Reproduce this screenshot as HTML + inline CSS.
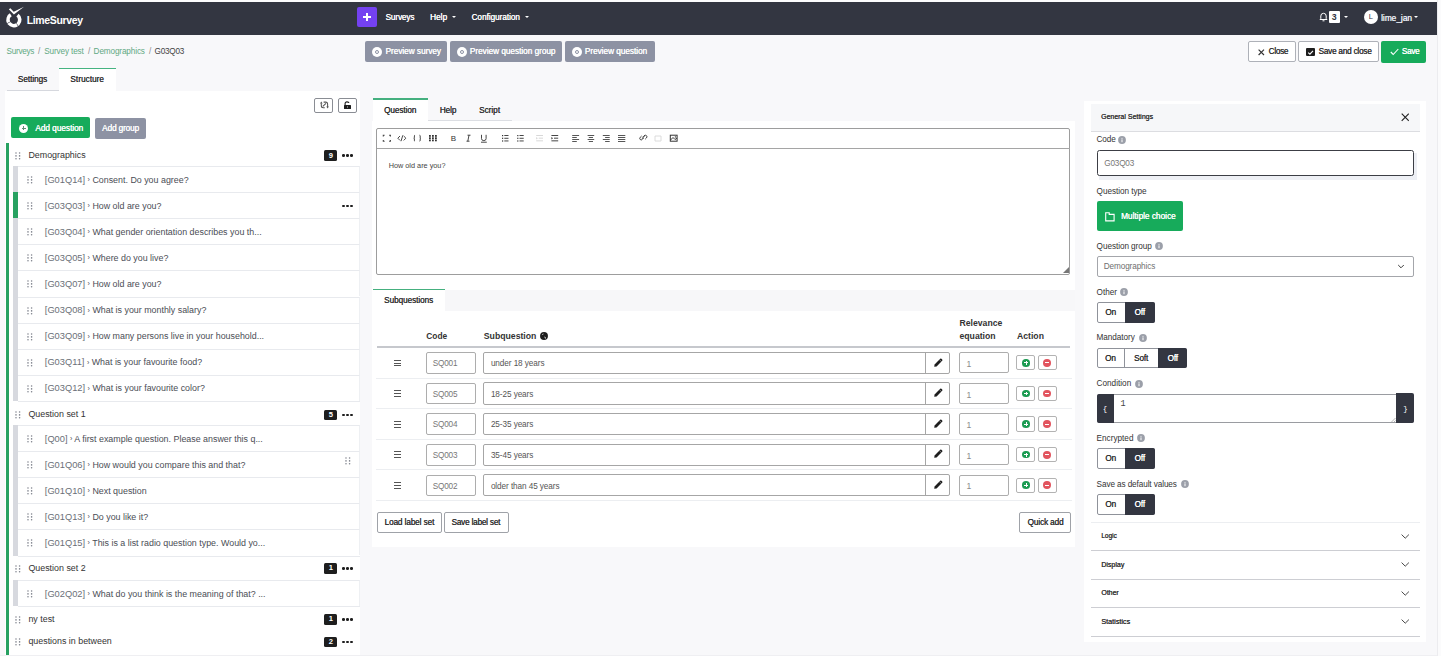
<!DOCTYPE html>
<html><head><meta charset="utf-8">
<style>
*{box-sizing:border-box;margin:0;padding:0}
html,body{width:1441px;height:656px;overflow:hidden}
body{background:#f8f8fa;font-family:"Liberation Sans",sans-serif;color:#333;position:relative;font-size:8px}
.a{position:absolute}
.t{position:absolute;white-space:nowrap;line-height:12px}
.b{font-weight:bold}
.m{font-weight:normal;text-shadow:0.25px 0 0 currentColor}
#hdr{left:0;top:2px;width:1437px;height:32.5px;background:#333641}
#rstrip{left:1437px;top:0;width:4px;height:656px;background:#fbfbfc;border-left:1px solid #ececef}
#tstrip{left:0;top:0;width:1437px;height:2px;background:#fcfcfd}
.wt{color:#fff}
.pbtn{position:absolute;top:41px;height:21px;background:#8d92a3;border-radius:2px}
.pbtn .t{color:#fff;font-weight:normal;text-shadow:0.3px 0 0 #fff;font-size:8.2px;top:4.5px}
.eye{position:absolute;top:5.5px;width:10px;height:10px;border-radius:50%;background:#fff}
.eye:after{content:"";position:absolute;left:3px;top:3px;width:4px;height:4px;border-radius:50%;border:1px solid #8d92a3;box-sizing:border-box}
.obtn{position:absolute;top:41px;height:21px;background:#fff;border:1px solid #aeb1b8;border-radius:2px}
.panel{position:absolute;background:#fff}
</style></head><body>
<!-- header -->
<div id="hdr" class="a"></div>
<div id="rstrip" class="a"></div>
<div id="tstrip" class="a"></div>
<svg class="a" style="left:0;top:0" width="30" height="35" viewBox="0 0 30 35">
  <path d="M10.80 14.84 A5.85 5.85 0 1 0 17.50 15.19" fill="none" stroke="#fff" stroke-width="3.6" stroke-dasharray="8.2 0.55 9 0.55 30"/>
  <path d="M8.8 9.3 L10.4 8.3 L13.7 11.7 L24 6.8 L13.9 14.4 Z" fill="#fff"/>
</svg>
<div class="t b wt" style="left:26.7px;top:14.3px;font-size:10.5px;letter-spacing:-0.36px">LimeSurvey</div>
<div class="a" style="left:357px;top:7px;width:20px;height:20px;background:#7441f1;border-radius:2px"></div>
<div class="a" style="left:363px;top:16.3px;width:8px;height:1.5px;background:#fff"></div>
<div class="a" style="left:366.25px;top:13px;width:1.5px;height:8px;background:#fff"></div>
<div class="t m wt" style="left:385.5px;top:11.5px;font-size:8.2px;letter-spacing:-0.12px">Surveys</div>
<div class="t m wt" style="left:430px;top:11.5px;font-size:8.27px">Help</div>
<div class="a" style="left:451.5px;top:16px;border-left:2px solid transparent;border-right:2px solid transparent;border-top:2.3px solid #fff"></div>
<div class="t m wt" style="left:471.5px;top:11.5px;font-size:8.15px">Configuration</div>
<div class="a" style="left:524.7px;top:16px;border-left:2px solid transparent;border-right:2px solid transparent;border-top:2.3px solid #fff"></div>
<!-- bell -->
<svg class="a" style="left:1319px;top:12px" width="9" height="10" viewBox="0 0 9 10">
  <path d="M1 7.5 L1.8 6.5 L1.8 4 A2.7 2.7 0 0 1 7.2 4 L7.2 6.5 L8 7.5 Z" fill="none" stroke="#fff" stroke-width="1"/>
  <path d="M3.5 8.8 L5.5 8.8" stroke="#fff" stroke-width="1"/>
</svg>
<div class="a" style="left:1329px;top:11.3px;width:10.5px;height:11.5px;background:#fff;border-radius:1px"></div>
<div class="t b" style="left:1329px;width:10.5px;text-align:center;top:11.2px;font-size:8.8px;color:#333641">3</div>
<div class="a" style="left:1343.7px;top:15.5px;border-left:2px solid transparent;border-right:2px solid transparent;border-top:2.3px solid #fff"></div>
<div class="a" style="left:1364px;top:10px;width:14px;height:14px;background:#fff;border-radius:50%"></div>
<div class="t" style="left:1368.7px;top:11px;font-size:7.5px;color:#333641">L</div>
<div class="t m" style="left:1381px;top:11.5px;font-size:8.32px;color:#e8ecf3">lime_jan</div>
<div class="a" style="left:1414px;top:16px;border-left:2px solid transparent;border-right:2px solid transparent;border-top:2.3px solid #fff"></div>

<!-- breadcrumb -->
<div class="t" style="left:6.6px;top:45.5px;font-size:8.2px;letter-spacing:-0.3px;color:#62a883">Surveys</div>
<div class="t" style="left:38px;top:45.5px;font-size:8.2px;color:#8a8a8a">/</div>
<div class="t" style="left:44.2px;top:45.5px;font-size:8.2px;letter-spacing:-0.13px;color:#62a883">Survey test</div>
<div class="t" style="left:88px;top:45.5px;font-size:8.2px;color:#8a8a8a">/</div>
<div class="t" style="left:93.6px;top:45.5px;font-size:8.2px;letter-spacing:-0.13px;color:#62a883">Demographics</div>
<div class="t" style="left:149px;top:45.5px;font-size:8.2px;color:#8a8a8a">/</div>
<div class="t" style="left:154.5px;top:45.5px;font-size:8.2px;letter-spacing:-0.24px;color:#444">G03Q03</div>

<!-- preview buttons -->
<div class="pbtn" style="left:365px;width:82px"><div class="eye" style="left:7px"></div><div class="t" style="left:20.4px">Preview survey</div></div>
<div class="pbtn" style="left:450px;width:112px"><div class="eye" style="left:7px"></div><div class="t" style="left:19.8px">Preview question group</div></div>
<div class="pbtn" style="left:565px;width:89.5px"><div class="eye" style="left:7px"></div><div class="t" style="left:19.7px">Preview question</div></div>

<!-- right buttons -->
<div class="obtn" style="left:1248px;width:47.5px"></div>
<svg class="a" style="left:1257.6px;top:48.6px" width="7" height="7" viewBox="0 0 7 7"><path d="M0.6 0.6 L6 6 M6 0.6 L0.6 6" stroke="#333" stroke-width="1.15"/></svg>
<div class="t m" style="left:1268.6px;top:45.5px;font-size:8.2px;letter-spacing:-0.28px;color:#333">Close</div>
<div class="obtn" style="left:1297.6px;width:81px"></div>
<div class="a" style="left:1306.3px;top:47.5px;width:8.6px;height:8.4px;background:#1e1e1e;border-radius:1px"></div>
<svg class="a" style="left:1307px;top:48.5px" width="7" height="7" viewBox="0 0 7 7"><path d="M1.2 3.6 L2.9 5.2 L6 1.8" fill="none" stroke="#fff" stroke-width="1.1"/></svg>
<div class="t m" style="left:1318.4px;top:45.5px;font-size:8.2px;letter-spacing:-0.2px;color:#333">Save and close</div>
<div class="a" style="left:1381.2px;top:41px;width:45px;height:21.5px;background:#17ab5b;border-radius:2px"></div>
<svg class="a" style="left:1389.5px;top:47.5px" width="9" height="8" viewBox="0 0 9 8"><path d="M0.8 4 L3.2 6.5 L8.3 1" fill="none" stroke="#fff" stroke-width="1.1"/></svg>
<div class="t m wt" style="left:1401.8px;top:45.5px;font-size:8.2px;letter-spacing:-0.3px">Save</div>

<!-- tabs -->
<div class="a" style="left:6.6px;top:89.5px;width:52.4px;height:1px;background:#d6d8de"></div>
<div class="t m" style="left:17.8px;top:74px;font-size:8.2px;color:#333;letter-spacing:-0.05px">Settings</div>
<div class="a" style="left:59px;top:69px;width:57px;height:23px;background:#fff"></div>
<div class="a" style="left:59px;top:67.7px;width:57px;height:1.6px;background:#45b381"></div>
<div class="t m" style="left:70.3px;top:74px;font-size:8.2px;letter-spacing:0.05px;color:#333">Structure</div>

<!-- left panel -->
<!-- left -->
<div class="panel" style="left:5px;top:91px;width:355px;height:565px"></div>

<div class="a" style="left:314.3px;top:98.3px;width:19px;height:14.3px;border:1px solid #8a8d94;border-radius:2px;background:#fff"></div>
<svg class="a" style="left:319.5px;top:101.3px" width="9" height="8" viewBox="0 0 9 8"><g fill="none" stroke="#555" stroke-width="1.05"><path d="M1.3 2.2 L1.3 4.8 Q1.3 6.8 3.3 6.8 L4.8 6.8"/><path d="M3.6 1.1 L5.6 1.1 Q7.6 1.1 7.6 3.1 L7.6 6"/><path d="M2.8 5.4 L6 2.3"/></g><path d="M0 2.6 L1.3 0.6 L2.6 2.6Z M6.3 5.6 L7.6 7.6 L8.9 5.6Z" fill="#555"/></svg>
<div class="a" style="left:338.2px;top:98.3px;width:18.5px;height:14.3px;border:1px solid #8a8d94;border-radius:2px;background:#fff"></div>
<div class="a" style="left:344.1px;top:105px;width:7px;height:3.9px;background:#1e1e1e;border-radius:0.5px"></div>
<svg class="a" style="left:343px;top:101px" width="10" height="5" viewBox="0 0 10 5"><path d="M2.1 4.5 L2.1 2.6 Q2.1 0.9 4 0.9 Q5.9 0.9 5.9 2 " fill="none" stroke="#1e1e1e" stroke-width="1.1"/></svg><div class="a" style="left:347px;top:106.2px;width:1.3px;height:1.4px;background:#777"></div>
<div class="a" style="left:11px;top:117.4px;width:79px;height:21px;background:#17ab5b;border-radius:2px"></div>
<div class="a" style="left:19px;top:123.5px;width:9.4px;height:9.4px;border-radius:50%;background:#fff"></div>
<div class="a" style="left:21.7px;top:127.8px;width:4px;height:0.8px;background:#5f8f76"></div>
<div class="a" style="left:23.3px;top:126.2px;width:0.8px;height:4px;background:#5f8f76"></div>
<div class="t m wt" style="left:35.2px;top:122.8px;font-size:8.22px">Add question</div>
<div class="a" style="left:95.1px;top:118px;width:51.4px;height:20.5px;background:#8d92a3;border-radius:2px"></div>
<div class="t m wt" style="left:102.1px;top:122.8px;font-size:8.2px;letter-spacing:-0.1px">Add group</div>

<div class="a" style="left:6px;top:143px;width:3px;height:511.5px;background:#27a161"></div>
<svg class="a" style="left:15.15px;top:151.65px" width="7" height="9" viewBox="0 0 7 9" fill="#7d818b"><circle cx="1.00" cy="1.00" r="0.78"/><circle cx="4.60" cy="1.00" r="0.78"/><circle cx="1.00" cy="3.90" r="0.78"/><circle cx="4.60" cy="3.90" r="0.78"/><circle cx="1.00" cy="6.80" r="0.78"/><circle cx="4.60" cy="6.80" r="0.78"/></svg>
<div class="t" style="left:28.4px;top:148.60px;font-size:8.9px;color:#333">Demographics</div>
<div class="a" style="left:324.4px;top:150.20px;width:13px;height:10.8px;background:#1e1e1e;border-radius:1.5px"></div>
<div class="t b" style="left:324.4px;width:13px;text-align:center;top:149.50px;font-size:7.6px;color:#fff">9</div>
<div class="a" style="left:342.20px;top:154.15px;width:2.6px;height:2.6px;border-radius:50%;background:#1e1e1e"></div><div class="a" style="left:346.10px;top:154.15px;width:2.6px;height:2.6px;border-radius:50%;background:#1e1e1e"></div><div class="a" style="left:350.00px;top:154.15px;width:2.6px;height:2.6px;border-radius:50%;background:#1e1e1e"></div>
<div class="a" style="left:13px;top:166.00px;width:4.7px;height:234.90px;background:#d7d9df"></div>
<div class="a" style="left:17.7px;top:166.00px;width:342.3px;height:26.10px;border-top:1px solid #e8eaee;border-right:1px solid #eef0f3"></div>
<svg class="a" style="left:27.25px;top:176.05px" width="7" height="9" viewBox="0 0 7 9" fill="#7d818b"><circle cx="1.00" cy="1.00" r="0.78"/><circle cx="4.60" cy="1.00" r="0.78"/><circle cx="1.00" cy="3.90" r="0.78"/><circle cx="4.60" cy="3.90" r="0.78"/><circle cx="1.00" cy="6.80" r="0.78"/><circle cx="4.60" cy="6.80" r="0.78"/></svg>
<div class="t" style="left:44.8px;top:173.50px;font-size:8.9px;color:#4a4d55"><span style="color:#6b6f78;font-size:9.3px">[G01Q14]</span> <span style="font-size:7px;position:relative;top:-0.5px">›</span> Consent. Do you agree?</div>
<div class="a" style="left:17.7px;top:192.10px;width:342.3px;height:26.10px;border-top:1px solid #e8eaee;border-right:1px solid #eef0f3"></div>
<svg class="a" style="left:27.25px;top:202.15px" width="7" height="9" viewBox="0 0 7 9" fill="#7d818b"><circle cx="1.00" cy="1.00" r="0.78"/><circle cx="4.60" cy="1.00" r="0.78"/><circle cx="1.00" cy="3.90" r="0.78"/><circle cx="4.60" cy="3.90" r="0.78"/><circle cx="1.00" cy="6.80" r="0.78"/><circle cx="4.60" cy="6.80" r="0.78"/></svg>
<div class="t" style="left:44.8px;top:199.60px;font-size:8.9px;color:#4a4d55"><span style="color:#6b6f78;font-size:9.3px">[G03Q03]</span> <span style="font-size:7px;position:relative;top:-0.5px">›</span> How old are you?</div>
<div class="a" style="left:13px;top:192.10px;width:4.7px;height:26.10px;background:#27a161"></div>
<div class="a" style="left:342.20px;top:204.75px;width:2.6px;height:2.6px;border-radius:50%;background:#1e1e1e"></div><div class="a" style="left:346.10px;top:204.75px;width:2.6px;height:2.6px;border-radius:50%;background:#1e1e1e"></div><div class="a" style="left:350.00px;top:204.75px;width:2.6px;height:2.6px;border-radius:50%;background:#1e1e1e"></div>
<div class="a" style="left:17.7px;top:218.20px;width:342.3px;height:26.10px;border-top:1px solid #e8eaee;border-right:1px solid #eef0f3"></div>
<svg class="a" style="left:27.25px;top:228.25px" width="7" height="9" viewBox="0 0 7 9" fill="#7d818b"><circle cx="1.00" cy="1.00" r="0.78"/><circle cx="4.60" cy="1.00" r="0.78"/><circle cx="1.00" cy="3.90" r="0.78"/><circle cx="4.60" cy="3.90" r="0.78"/><circle cx="1.00" cy="6.80" r="0.78"/><circle cx="4.60" cy="6.80" r="0.78"/></svg>
<div class="t" style="left:44.8px;top:225.70px;font-size:8.9px;color:#4a4d55"><span style="color:#6b6f78;font-size:9.3px">[G03Q04]</span> <span style="font-size:7px;position:relative;top:-0.5px">›</span> What gender orientation describes you th...</div>
<div class="a" style="left:17.7px;top:244.30px;width:342.3px;height:26.10px;border-top:1px solid #e8eaee;border-right:1px solid #eef0f3"></div>
<svg class="a" style="left:27.25px;top:254.35px" width="7" height="9" viewBox="0 0 7 9" fill="#7d818b"><circle cx="1.00" cy="1.00" r="0.78"/><circle cx="4.60" cy="1.00" r="0.78"/><circle cx="1.00" cy="3.90" r="0.78"/><circle cx="4.60" cy="3.90" r="0.78"/><circle cx="1.00" cy="6.80" r="0.78"/><circle cx="4.60" cy="6.80" r="0.78"/></svg>
<div class="t" style="left:44.8px;top:251.80px;font-size:8.9px;color:#4a4d55"><span style="color:#6b6f78;font-size:9.3px">[G03Q05]</span> <span style="font-size:7px;position:relative;top:-0.5px">›</span> Where do you live?</div>
<div class="a" style="left:17.7px;top:270.40px;width:342.3px;height:26.10px;border-top:1px solid #e8eaee;border-right:1px solid #eef0f3"></div>
<svg class="a" style="left:27.25px;top:280.45px" width="7" height="9" viewBox="0 0 7 9" fill="#7d818b"><circle cx="1.00" cy="1.00" r="0.78"/><circle cx="4.60" cy="1.00" r="0.78"/><circle cx="1.00" cy="3.90" r="0.78"/><circle cx="4.60" cy="3.90" r="0.78"/><circle cx="1.00" cy="6.80" r="0.78"/><circle cx="4.60" cy="6.80" r="0.78"/></svg>
<div class="t" style="left:44.8px;top:277.90px;font-size:8.9px;color:#4a4d55"><span style="color:#6b6f78;font-size:9.3px">[G03Q07]</span> <span style="font-size:7px;position:relative;top:-0.5px">›</span> How old are you?</div>
<div class="a" style="left:17.7px;top:296.50px;width:342.3px;height:26.10px;border-top:1px solid #e8eaee;border-right:1px solid #eef0f3"></div>
<svg class="a" style="left:27.25px;top:306.55px" width="7" height="9" viewBox="0 0 7 9" fill="#7d818b"><circle cx="1.00" cy="1.00" r="0.78"/><circle cx="4.60" cy="1.00" r="0.78"/><circle cx="1.00" cy="3.90" r="0.78"/><circle cx="4.60" cy="3.90" r="0.78"/><circle cx="1.00" cy="6.80" r="0.78"/><circle cx="4.60" cy="6.80" r="0.78"/></svg>
<div class="t" style="left:44.8px;top:304.00px;font-size:8.9px;color:#4a4d55"><span style="color:#6b6f78;font-size:9.3px">[G03Q08]</span> <span style="font-size:7px;position:relative;top:-0.5px">›</span> What is your monthly salary?</div>
<div class="a" style="left:17.7px;top:322.60px;width:342.3px;height:26.10px;border-top:1px solid #e8eaee;border-right:1px solid #eef0f3"></div>
<svg class="a" style="left:27.25px;top:332.65px" width="7" height="9" viewBox="0 0 7 9" fill="#7d818b"><circle cx="1.00" cy="1.00" r="0.78"/><circle cx="4.60" cy="1.00" r="0.78"/><circle cx="1.00" cy="3.90" r="0.78"/><circle cx="4.60" cy="3.90" r="0.78"/><circle cx="1.00" cy="6.80" r="0.78"/><circle cx="4.60" cy="6.80" r="0.78"/></svg>
<div class="t" style="left:44.8px;top:330.10px;font-size:8.9px;color:#4a4d55"><span style="color:#6b6f78;font-size:9.3px">[G03Q09]</span> <span style="font-size:7px;position:relative;top:-0.5px">›</span> How many persons live in your household...</div>
<div class="a" style="left:17.7px;top:348.70px;width:342.3px;height:26.10px;border-top:1px solid #e8eaee;border-right:1px solid #eef0f3"></div>
<svg class="a" style="left:27.25px;top:358.75px" width="7" height="9" viewBox="0 0 7 9" fill="#7d818b"><circle cx="1.00" cy="1.00" r="0.78"/><circle cx="4.60" cy="1.00" r="0.78"/><circle cx="1.00" cy="3.90" r="0.78"/><circle cx="4.60" cy="3.90" r="0.78"/><circle cx="1.00" cy="6.80" r="0.78"/><circle cx="4.60" cy="6.80" r="0.78"/></svg>
<div class="t" style="left:44.8px;top:356.20px;font-size:8.9px;color:#4a4d55"><span style="color:#6b6f78;font-size:9.3px">[G03Q11]</span> <span style="font-size:7px;position:relative;top:-0.5px">›</span> What is your favourite food?</div>
<div class="a" style="left:17.7px;top:374.80px;width:342.3px;height:26.10px;border-top:1px solid #e8eaee;border-right:1px solid #eef0f3"></div>
<svg class="a" style="left:27.25px;top:384.85px" width="7" height="9" viewBox="0 0 7 9" fill="#7d818b"><circle cx="1.00" cy="1.00" r="0.78"/><circle cx="4.60" cy="1.00" r="0.78"/><circle cx="1.00" cy="3.90" r="0.78"/><circle cx="4.60" cy="3.90" r="0.78"/><circle cx="1.00" cy="6.80" r="0.78"/><circle cx="4.60" cy="6.80" r="0.78"/></svg>
<div class="t" style="left:44.8px;top:382.30px;font-size:8.9px;color:#4a4d55"><span style="color:#6b6f78;font-size:9.3px">[G03Q12]</span> <span style="font-size:7px;position:relative;top:-0.5px">›</span> What is your favourite color?</div>
<div class="a" style="left:17.7px;top:400.90px;width:342.3px;height:1px;background:#e8eaee"></div>
<svg class="a" style="left:15.15px;top:411.15px" width="7" height="9" viewBox="0 0 7 9" fill="#7d818b"><circle cx="1.00" cy="1.00" r="0.78"/><circle cx="4.60" cy="1.00" r="0.78"/><circle cx="1.00" cy="3.90" r="0.78"/><circle cx="4.60" cy="3.90" r="0.78"/><circle cx="1.00" cy="6.80" r="0.78"/><circle cx="4.60" cy="6.80" r="0.78"/></svg>
<div class="t" style="left:28.4px;top:408.10px;font-size:8.9px;color:#333">Question set 1</div>
<div class="a" style="left:324.4px;top:409.70px;width:13px;height:10.8px;background:#1e1e1e;border-radius:1.5px"></div>
<div class="t b" style="left:324.4px;width:13px;text-align:center;top:409.00px;font-size:7.6px;color:#fff">5</div>
<div class="a" style="left:342.20px;top:413.65px;width:2.6px;height:2.6px;border-radius:50%;background:#1e1e1e"></div><div class="a" style="left:346.10px;top:413.65px;width:2.6px;height:2.6px;border-radius:50%;background:#1e1e1e"></div><div class="a" style="left:350.00px;top:413.65px;width:2.6px;height:2.6px;border-radius:50%;background:#1e1e1e"></div>
<div class="a" style="left:13px;top:425.00px;width:4.7px;height:130.50px;background:#d7d9df"></div>
<div class="a" style="left:17.7px;top:425.00px;width:342.3px;height:26.10px;border-top:1px solid #e8eaee;border-right:1px solid #eef0f3"></div>
<svg class="a" style="left:27.25px;top:435.05px" width="7" height="9" viewBox="0 0 7 9" fill="#7d818b"><circle cx="1.00" cy="1.00" r="0.78"/><circle cx="4.60" cy="1.00" r="0.78"/><circle cx="1.00" cy="3.90" r="0.78"/><circle cx="4.60" cy="3.90" r="0.78"/><circle cx="1.00" cy="6.80" r="0.78"/><circle cx="4.60" cy="6.80" r="0.78"/></svg>
<div class="t" style="left:44.8px;top:432.50px;font-size:8.9px;color:#4a4d55"><span style="color:#6b6f78;font-size:9.3px">[Q00]</span> <span style="font-size:7px;position:relative;top:-0.5px">›</span> A first example question. Please answer this q...</div>
<div class="a" style="left:17.7px;top:451.10px;width:342.3px;height:26.10px;border-top:1px solid #e8eaee;border-right:1px solid #eef0f3"></div>
<svg class="a" style="left:27.25px;top:461.15px" width="7" height="9" viewBox="0 0 7 9" fill="#7d818b"><circle cx="1.00" cy="1.00" r="0.78"/><circle cx="4.60" cy="1.00" r="0.78"/><circle cx="1.00" cy="3.90" r="0.78"/><circle cx="4.60" cy="3.90" r="0.78"/><circle cx="1.00" cy="6.80" r="0.78"/><circle cx="4.60" cy="6.80" r="0.78"/></svg>
<div class="t" style="left:44.8px;top:458.60px;font-size:8.9px;color:#4a4d55"><span style="color:#6b6f78;font-size:9.3px">[G01Q06]</span> <span style="font-size:7px;position:relative;top:-0.5px">›</span> How would you compare this and that?</div>
<svg class="a" style="left:345.25px;top:457.35px" width="7" height="9" viewBox="0 0 7 9" fill="#7d818b"><circle cx="1.00" cy="1.00" r="0.78"/><circle cx="4.60" cy="1.00" r="0.78"/><circle cx="1.00" cy="3.90" r="0.78"/><circle cx="4.60" cy="3.90" r="0.78"/><circle cx="1.00" cy="6.80" r="0.78"/><circle cx="4.60" cy="6.80" r="0.78"/></svg>
<div class="a" style="left:17.7px;top:477.20px;width:342.3px;height:26.10px;border-top:1px solid #e8eaee;border-right:1px solid #eef0f3"></div>
<svg class="a" style="left:27.25px;top:487.25px" width="7" height="9" viewBox="0 0 7 9" fill="#7d818b"><circle cx="1.00" cy="1.00" r="0.78"/><circle cx="4.60" cy="1.00" r="0.78"/><circle cx="1.00" cy="3.90" r="0.78"/><circle cx="4.60" cy="3.90" r="0.78"/><circle cx="1.00" cy="6.80" r="0.78"/><circle cx="4.60" cy="6.80" r="0.78"/></svg>
<div class="t" style="left:44.8px;top:484.70px;font-size:8.9px;color:#4a4d55"><span style="color:#6b6f78;font-size:9.3px">[G01Q10]</span> <span style="font-size:7px;position:relative;top:-0.5px">›</span> Next question</div>
<div class="a" style="left:17.7px;top:503.30px;width:342.3px;height:26.10px;border-top:1px solid #e8eaee;border-right:1px solid #eef0f3"></div>
<svg class="a" style="left:27.25px;top:513.35px" width="7" height="9" viewBox="0 0 7 9" fill="#7d818b"><circle cx="1.00" cy="1.00" r="0.78"/><circle cx="4.60" cy="1.00" r="0.78"/><circle cx="1.00" cy="3.90" r="0.78"/><circle cx="4.60" cy="3.90" r="0.78"/><circle cx="1.00" cy="6.80" r="0.78"/><circle cx="4.60" cy="6.80" r="0.78"/></svg>
<div class="t" style="left:44.8px;top:510.80px;font-size:8.9px;color:#4a4d55"><span style="color:#6b6f78;font-size:9.3px">[G01Q13]</span> <span style="font-size:7px;position:relative;top:-0.5px">›</span> Do you like it?</div>
<div class="a" style="left:17.7px;top:529.40px;width:342.3px;height:26.10px;border-top:1px solid #e8eaee;border-right:1px solid #eef0f3"></div>
<svg class="a" style="left:27.25px;top:539.45px" width="7" height="9" viewBox="0 0 7 9" fill="#7d818b"><circle cx="1.00" cy="1.00" r="0.78"/><circle cx="4.60" cy="1.00" r="0.78"/><circle cx="1.00" cy="3.90" r="0.78"/><circle cx="4.60" cy="3.90" r="0.78"/><circle cx="1.00" cy="6.80" r="0.78"/><circle cx="4.60" cy="6.80" r="0.78"/></svg>
<div class="t" style="left:44.8px;top:536.90px;font-size:8.9px;color:#4a4d55"><span style="color:#6b6f78;font-size:9.3px">[G01Q15]</span> <span style="font-size:7px;position:relative;top:-0.5px">›</span> This is a list radio question type. Would yo...</div>
<div class="a" style="left:17.7px;top:555.50px;width:342.3px;height:1px;background:#e8eaee"></div>
<svg class="a" style="left:15.15px;top:564.55px" width="7" height="9" viewBox="0 0 7 9" fill="#7d818b"><circle cx="1.00" cy="1.00" r="0.78"/><circle cx="4.60" cy="1.00" r="0.78"/><circle cx="1.00" cy="3.90" r="0.78"/><circle cx="4.60" cy="3.90" r="0.78"/><circle cx="1.00" cy="6.80" r="0.78"/><circle cx="4.60" cy="6.80" r="0.78"/></svg>
<div class="t" style="left:28.4px;top:561.50px;font-size:8.9px;color:#333">Question set 2</div>
<div class="a" style="left:324.4px;top:563.10px;width:13px;height:10.8px;background:#1e1e1e;border-radius:1.5px"></div>
<div class="t b" style="left:324.4px;width:13px;text-align:center;top:562.40px;font-size:7.6px;color:#fff">1</div>
<div class="a" style="left:342.20px;top:567.05px;width:2.6px;height:2.6px;border-radius:50%;background:#1e1e1e"></div><div class="a" style="left:346.10px;top:567.05px;width:2.6px;height:2.6px;border-radius:50%;background:#1e1e1e"></div><div class="a" style="left:350.00px;top:567.05px;width:2.6px;height:2.6px;border-radius:50%;background:#1e1e1e"></div>
<div class="a" style="left:13px;top:580.30px;width:4.7px;height:26.10px;background:#d7d9df"></div>
<div class="a" style="left:17.7px;top:580.30px;width:342.3px;height:26.10px;border-top:1px solid #e8eaee;border-right:1px solid #eef0f3"></div>
<svg class="a" style="left:27.25px;top:590.35px" width="7" height="9" viewBox="0 0 7 9" fill="#7d818b"><circle cx="1.00" cy="1.00" r="0.78"/><circle cx="4.60" cy="1.00" r="0.78"/><circle cx="1.00" cy="3.90" r="0.78"/><circle cx="4.60" cy="3.90" r="0.78"/><circle cx="1.00" cy="6.80" r="0.78"/><circle cx="4.60" cy="6.80" r="0.78"/></svg>
<div class="t" style="left:44.8px;top:587.80px;font-size:8.9px;color:#4a4d55"><span style="color:#6b6f78;font-size:9.3px">[G02Q02]</span> <span style="font-size:7px;position:relative;top:-0.5px">›</span> What do you think is the meaning of that? ...</div>
<div class="a" style="left:17.7px;top:606.40px;width:342.3px;height:1px;background:#e8eaee"></div>
<svg class="a" style="left:15.15px;top:615.55px" width="7" height="9" viewBox="0 0 7 9" fill="#7d818b"><circle cx="1.00" cy="1.00" r="0.78"/><circle cx="4.60" cy="1.00" r="0.78"/><circle cx="1.00" cy="3.90" r="0.78"/><circle cx="4.60" cy="3.90" r="0.78"/><circle cx="1.00" cy="6.80" r="0.78"/><circle cx="4.60" cy="6.80" r="0.78"/></svg>
<div class="t" style="left:28.4px;top:612.50px;font-size:8.9px;color:#333">ny test</div>
<div class="a" style="left:324.4px;top:614.10px;width:13px;height:10.8px;background:#1e1e1e;border-radius:1.5px"></div>
<div class="t b" style="left:324.4px;width:13px;text-align:center;top:613.40px;font-size:7.6px;color:#fff">1</div>
<div class="a" style="left:342.20px;top:618.05px;width:2.6px;height:2.6px;border-radius:50%;background:#1e1e1e"></div><div class="a" style="left:346.10px;top:618.05px;width:2.6px;height:2.6px;border-radius:50%;background:#1e1e1e"></div><div class="a" style="left:350.00px;top:618.05px;width:2.6px;height:2.6px;border-radius:50%;background:#1e1e1e"></div>
<svg class="a" style="left:15.15px;top:638.15px" width="7" height="9" viewBox="0 0 7 9" fill="#7d818b"><circle cx="1.00" cy="1.00" r="0.78"/><circle cx="4.60" cy="1.00" r="0.78"/><circle cx="1.00" cy="3.90" r="0.78"/><circle cx="4.60" cy="3.90" r="0.78"/><circle cx="1.00" cy="6.80" r="0.78"/><circle cx="4.60" cy="6.80" r="0.78"/></svg>
<div class="t" style="left:28.4px;top:635.10px;font-size:8.9px;color:#333">questions in between</div>
<div class="a" style="left:324.4px;top:636.70px;width:13px;height:10.8px;background:#1e1e1e;border-radius:1.5px"></div>
<div class="t b" style="left:324.4px;width:13px;text-align:center;top:636.00px;font-size:7.6px;color:#fff">2</div>
<div class="a" style="left:342.20px;top:640.65px;width:2.6px;height:2.6px;border-radius:50%;background:#1e1e1e"></div><div class="a" style="left:346.10px;top:640.65px;width:2.6px;height:2.6px;border-radius:50%;background:#1e1e1e"></div><div class="a" style="left:350.00px;top:640.65px;width:2.6px;height:2.6px;border-radius:50%;background:#1e1e1e"></div>
<!-- mid -->
<div class="a" style="left:372.8px;top:100px;width:55px;height:21px;background:#fff"></div>
<div class="a" style="left:372.8px;top:98.4px;width:55px;height:1.7px;background:#45b07f"></div>
<div class="a" style="left:427.8px;top:120.3px;width:84px;height:1.2px;background:#dcdee3"></div>
<div class="t m" style="left:384px;top:105px;font-size:8.2px;color:#333;letter-spacing:-0.05px">Question</div>
<div class="t m" style="left:439.7px;top:105px;font-size:8.2px;color:#333;letter-spacing:-0.1px">Help</div>
<div class="t m" style="left:478.9px;top:105px;font-size:8.26px;color:#333">Script</div>
<div class="panel" style="left:372px;top:121px;width:702.7px;height:425.5px"></div>
<div class="a" style="left:376.3px;top:128.3px;width:694px;height:146.5px;border:1px solid #9d9d9d;border-radius:2px;background:#fff"></div>
<div class="a" style="left:376.8px;top:147.9px;width:693px;height:1px;background:#a5a5a5"></div>
<div class="t" style="left:388.7px;top:159.6px;font-size:7.3px;color:#444">How old are you?</div>
<svg class="a" style="left:1063px;top:267px" width="6" height="6" viewBox="0 0 6 6"><path d="M6 0 L6 6 L0 6 Z" fill="#777"/></svg>

<svg class="a" style="left:376px;top:128px" width="310" height="20" viewBox="0 0 310 20">
<g stroke="#444" stroke-width="1.1" fill="none">
<path d="M7.3 8.6 L7.3 7.3 L8.6 7.3 M13.1 7.3 L14.4 7.3 L14.4 8.6 M14.4 11.9 L14.4 13.2 L13.1 13.2 M8.6 13.2 L7.3 13.2 L7.3 11.9"/>
</g>
<g stroke="#333" stroke-width="0.9" fill="none">
<path d="M24 8 L21.8 10.2 L24 12.4 M27.7 8 L29.9 10.2 L27.7 12.4 M26.8 7.3 L25 13.2"/>
<path d="M39 7.2 Q38.4 7.2 38.4 8 L38.4 9.6 Q38.4 10.2 37.8 10.2 Q38.4 10.2 38.4 10.8 L38.4 12.4 Q38.4 13.2 39 13.2 M43.6 7.2 Q44.2 7.2 44.2 8 L44.2 9.6 Q44.2 10.2 44.8 10.2 Q44.2 10.2 44.2 10.8 L44.2 12.4 Q44.2 13.2 43.6 13.2"/>
</g>
<g fill="#333"><rect x="53" y="7" width="1.8" height="1.8"/><rect x="53" y="9.3" width="1.8" height="1.7"/><rect x="53" y="11.5" width="1.8" height="1.8"/><rect x="56" y="7" width="1.8" height="1.8"/><rect x="56" y="9.3" width="1.8" height="1.7"/><rect x="56" y="11.5" width="1.8" height="1.8"/><rect x="59" y="7" width="1.8" height="1.8"/><rect x="59" y="9.3" width="1.8" height="1.7"/><rect x="59" y="11.5" width="1.8" height="1.8"/></g>
<text x="74.7" y="13.4" font-family="Liberation Sans" font-size="8" fill="#333">B</text>
<path d="M91.5 7.2 L94.5 7.2 M90.5 13.2 L93.5 13.2 M93 7.2 L91.8 13.2" stroke="#333" stroke-width="0.9"/>
<path d="M105.5 6.8 L105.5 10.6 Q105.5 12.6 107.8 12.6 Q110.1 12.6 110.1 10.6 L110.1 6.8 M105 14.2 L110.8 14.2" stroke="#333" stroke-width="0.9" fill="none"/>
<g fill="#333">
<rect x="126" y="7" width="1.2" height="1.2"/><rect x="126" y="9.7" width="1.2" height="1.2"/><rect x="126" y="12.4" width="1.2" height="1.2"/>
<rect x="128.3" y="7.1" width="4.2" height="0.9"/><rect x="128.3" y="9.8" width="4.2" height="0.9"/><rect x="128.3" y="12.5" width="4.2" height="0.9"/>
<rect x="141.2" y="7" width="1.2" height="1.2"/><rect x="141.2" y="9.7" width="1.2" height="1.2"/><rect x="141.2" y="12.4" width="1.2" height="1.2"/>
<rect x="143.5" y="7.1" width="4.2" height="0.9"/><rect x="143.5" y="9.8" width="4.2" height="0.9"/><rect x="143.5" y="12.5" width="4.2" height="0.9"/>
</g>
<g fill="#d4d4d4"><rect x="160.2" y="7" width="6.8" height="0.9"/><rect x="162.7" y="9.7" width="4.3" height="0.9"/><rect x="160.2" y="12.4" width="6.8" height="0.9"/><path d="M160.2 9 L161.8 10.2 L160.2 11.4Z"/></g>
<g fill="#333"><rect x="175.4" y="7" width="6.8" height="0.9"/><rect x="178" y="9.7" width="4.2" height="0.9"/><rect x="175.4" y="12.4" width="6.8" height="0.9"/><path d="M175.4 9 L177 10.2 L175.4 11.4Z"/></g>
<g fill="#444">
<rect x="196.2" y="7" width="6.9" height="0.9"/><rect x="196.2" y="9" width="4.6" height="0.9"/><rect x="196.2" y="11" width="6.9" height="0.9"/><rect x="196.2" y="13" width="4.6" height="0.9"/>
<rect x="211.6" y="7" width="6.6" height="0.9"/><rect x="212.8" y="9" width="4.2" height="0.9"/><rect x="211.6" y="11" width="6.6" height="0.9"/><rect x="212.8" y="13" width="4.2" height="0.9"/>
<rect x="226.8" y="7" width="6.9" height="0.9"/><rect x="229.1" y="9" width="4.6" height="0.9"/><rect x="226.8" y="11" width="6.9" height="0.9"/><rect x="229.1" y="13" width="4.6" height="0.9"/>
<rect x="242" y="7" width="7.3" height="0.9"/><rect x="242" y="9" width="7.3" height="0.9"/><rect x="242" y="11" width="7.3" height="0.9"/><rect x="242" y="13" width="7.3" height="0.9"/>
</g>
<g stroke="#333" stroke-width="0.9" fill="none">
<path d="M266.5 9.3 L268 7.8 Q269.4 6.6 270.5 7.7 Q271.6 8.8 270.4 10 L269.2 11.2 M267.7 10 L266.5 11.2 Q265.3 12.6 264.2 11.5 Q263.1 10.4 264.3 9.2 L265.6 8 M265.8 10.8 L268.8 7.9"/>
</g>
<g stroke="#d8d8d8" stroke-width="0.9" fill="none"><path d="M279 8 L285 8 L285 13 L279 13 Z"/></g>
<g stroke="#333" stroke-width="1" fill="none"><rect x="294.3" y="7.2" width="6.8" height="6"/><path d="M294.5 12 L297 9.5 L299 11.5 L301 10"/></g>
<circle cx="299.4" cy="8.9" r="0.7" fill="#333"/>
</svg>
<div class="a" style="left:445px;top:289.5px;width:629.7px;height:21.3px;background:#f7f7f9"></div>
<div class="a" style="left:373px;top:288.8px;width:72px;height:1.7px;background:#45b07f"></div>
<div class="t" style="left:384.1px;top:294.8px;font-size:8.2px;color:#333;text-shadow:0.2px 0 0 #333;letter-spacing:-0.05px">Subquestions</div>
<div class="t b" style="left:426.3px;top:329.9px;font-size:8.4px;color:#333">Code</div>
<div class="t b" style="left:483.8px;top:329.9px;font-size:8.7px;color:#333">Subquestion</div>
<svg class="a" style="left:540px;top:331.8px" width="8" height="8" viewBox="0 0 8 8"><circle cx="4" cy="4" r="3.95" fill="#1e1e1e"/><path d="M1.8 3.2 Q2.2 1.6 3.6 1.4 L3.2 2.4 Q2.4 2.6 1.8 3.2Z" fill="#fff"/><path d="M4.2 4.6 Q5.6 4.9 6 6.2 Q5.4 6.7 5 6.4 Q4.6 5.4 4.2 4.6Z" fill="#fff"/></svg>
<div class="t b" style="left:959.5px;top:317px;font-size:8.67px;color:#333">Relevance</div>
<div class="t b" style="left:959.5px;top:330.2px;font-size:8.67px;color:#333">equation</div>
<div class="t b" style="left:1017px;top:330.2px;font-size:8.67px;color:#333">Action</div>
<div class="a" style="left:377.3px;top:346px;width:693.2px;height:2px;background:#c6c8cd"></div>
<div class="a" style="left:393.7px;top:359.60px;width:7.5px;height:0.95px;background:#555"></div>
<div class="a" style="left:393.7px;top:362.50px;width:7.5px;height:0.95px;background:#555"></div>
<div class="a" style="left:393.7px;top:365.40px;width:7.5px;height:0.95px;background:#555"></div>
<div class="a" style="left:425.5px;top:352.20px;width:50.3px;height:21.5px;border:1px solid #adadad;border-radius:2px"></div>
<div class="t" style="left:432.8px;top:358.10px;font-size:8.2px;letter-spacing:-0.2px;color:#777">SQ001</div>
<div class="a" style="left:483.2px;top:351.70px;width:467.3px;height:22.3px;border:1px solid #a6a6a6;border-radius:2px"></div>
<div class="a" style="left:925.3px;top:351.70px;width:1px;height:22.3px;background:#a6a6a6"></div>
<div class="t" style="left:490.9px;top:358.10px;font-size:8.2px;letter-spacing:-0.08px;color:#555">under 18 years</div>
<svg class="a" style="left:933.6px;top:357.60px" width="9" height="9" viewBox="0 0 9 9"><path d="M0.2 8.8 L0.6 6.4 L6.2 0.8 Q6.8 0.3 7.4 0.8 L8.2 1.6 Q8.7 2.2 8.2 2.8 L2.6 8.4 Z" fill="#1e1e1e"/><path d="M5.4 1.6 L7.4 3.6" stroke="#fff" stroke-width="0.45"/></svg>
<div class="a" style="left:959.2px;top:352.10px;width:49.5px;height:21.4px;border:1px solid #adadad;border-radius:2px"></div>
<div class="t" style="left:966.6px;top:357.90px;font-size:8.6px;color:#8c8c8c">1</div>
<div class="a" style="left:1016.4px;top:355.20px;width:19.1px;height:15.3px;border:1px solid #b3b3b3;border-radius:2px"></div>
<div class="a" style="left:1022.3px;top:359.00px;width:7.7px;height:7.7px;border-radius:50%;background:#1c9c52"></div>
<div class="a" style="left:1024.3px;top:362.45px;width:3.7px;height:0.9px;background:#fff"></div>
<div class="a" style="left:1025.7px;top:361.05px;width:0.9px;height:3.7px;background:#fff"></div>
<div class="a" style="left:1038.1px;top:355.20px;width:18.8px;height:15.3px;border:1px solid #b3b3b3;border-radius:2px"></div>
<div class="a" style="left:1043.3px;top:359.00px;width:7.8px;height:7.8px;border-radius:50%;background:#e2545e"></div>
<div class="a" style="left:1045.3px;top:362.45px;width:3.8px;height:0.9px;background:#fff"></div>
<div class="a" style="left:376px;top:377.60px;width:695.5px;height:1px;background:#eceef1"></div>
<div class="a" style="left:393.7px;top:390.20px;width:7.5px;height:0.95px;background:#555"></div>
<div class="a" style="left:393.7px;top:393.10px;width:7.5px;height:0.95px;background:#555"></div>
<div class="a" style="left:393.7px;top:396.00px;width:7.5px;height:0.95px;background:#555"></div>
<div class="a" style="left:425.5px;top:382.80px;width:50.3px;height:21.5px;border:1px solid #adadad;border-radius:2px"></div>
<div class="t" style="left:432.8px;top:388.70px;font-size:8.2px;letter-spacing:-0.2px;color:#777">SQ005</div>
<div class="a" style="left:483.2px;top:382.30px;width:467.3px;height:22.3px;border:1px solid #a6a6a6;border-radius:2px"></div>
<div class="a" style="left:925.3px;top:382.30px;width:1px;height:22.3px;background:#a6a6a6"></div>
<div class="t" style="left:490.9px;top:388.70px;font-size:8.2px;letter-spacing:-0.08px;color:#555">18-25 years</div>
<svg class="a" style="left:933.6px;top:388.20px" width="9" height="9" viewBox="0 0 9 9"><path d="M0.2 8.8 L0.6 6.4 L6.2 0.8 Q6.8 0.3 7.4 0.8 L8.2 1.6 Q8.7 2.2 8.2 2.8 L2.6 8.4 Z" fill="#1e1e1e"/><path d="M5.4 1.6 L7.4 3.6" stroke="#fff" stroke-width="0.45"/></svg>
<div class="a" style="left:959.2px;top:382.70px;width:49.5px;height:21.4px;border:1px solid #adadad;border-radius:2px"></div>
<div class="t" style="left:966.6px;top:388.50px;font-size:8.6px;color:#8c8c8c">1</div>
<div class="a" style="left:1016.4px;top:385.80px;width:19.1px;height:15.3px;border:1px solid #b3b3b3;border-radius:2px"></div>
<div class="a" style="left:1022.3px;top:389.60px;width:7.7px;height:7.7px;border-radius:50%;background:#1c9c52"></div>
<div class="a" style="left:1024.3px;top:393.05px;width:3.7px;height:0.9px;background:#fff"></div>
<div class="a" style="left:1025.7px;top:391.65px;width:0.9px;height:3.7px;background:#fff"></div>
<div class="a" style="left:1038.1px;top:385.80px;width:18.8px;height:15.3px;border:1px solid #b3b3b3;border-radius:2px"></div>
<div class="a" style="left:1043.3px;top:389.60px;width:7.8px;height:7.8px;border-radius:50%;background:#e2545e"></div>
<div class="a" style="left:1045.3px;top:393.05px;width:3.8px;height:0.9px;background:#fff"></div>
<div class="a" style="left:376px;top:408.20px;width:695.5px;height:1px;background:#eceef1"></div>
<div class="a" style="left:393.7px;top:420.80px;width:7.5px;height:0.95px;background:#555"></div>
<div class="a" style="left:393.7px;top:423.70px;width:7.5px;height:0.95px;background:#555"></div>
<div class="a" style="left:393.7px;top:426.60px;width:7.5px;height:0.95px;background:#555"></div>
<div class="a" style="left:425.5px;top:413.40px;width:50.3px;height:21.5px;border:1px solid #adadad;border-radius:2px"></div>
<div class="t" style="left:432.8px;top:419.30px;font-size:8.2px;letter-spacing:-0.2px;color:#777">SQ004</div>
<div class="a" style="left:483.2px;top:412.90px;width:467.3px;height:22.3px;border:1px solid #a6a6a6;border-radius:2px"></div>
<div class="a" style="left:925.3px;top:412.90px;width:1px;height:22.3px;background:#a6a6a6"></div>
<div class="t" style="left:490.9px;top:419.30px;font-size:8.2px;letter-spacing:-0.08px;color:#555">25-35 years</div>
<svg class="a" style="left:933.6px;top:418.80px" width="9" height="9" viewBox="0 0 9 9"><path d="M0.2 8.8 L0.6 6.4 L6.2 0.8 Q6.8 0.3 7.4 0.8 L8.2 1.6 Q8.7 2.2 8.2 2.8 L2.6 8.4 Z" fill="#1e1e1e"/><path d="M5.4 1.6 L7.4 3.6" stroke="#fff" stroke-width="0.45"/></svg>
<div class="a" style="left:959.2px;top:413.30px;width:49.5px;height:21.4px;border:1px solid #adadad;border-radius:2px"></div>
<div class="t" style="left:966.6px;top:419.10px;font-size:8.6px;color:#8c8c8c">1</div>
<div class="a" style="left:1016.4px;top:416.40px;width:19.1px;height:15.3px;border:1px solid #b3b3b3;border-radius:2px"></div>
<div class="a" style="left:1022.3px;top:420.20px;width:7.7px;height:7.7px;border-radius:50%;background:#1c9c52"></div>
<div class="a" style="left:1024.3px;top:423.65px;width:3.7px;height:0.9px;background:#fff"></div>
<div class="a" style="left:1025.7px;top:422.25px;width:0.9px;height:3.7px;background:#fff"></div>
<div class="a" style="left:1038.1px;top:416.40px;width:18.8px;height:15.3px;border:1px solid #b3b3b3;border-radius:2px"></div>
<div class="a" style="left:1043.3px;top:420.20px;width:7.8px;height:7.8px;border-radius:50%;background:#e2545e"></div>
<div class="a" style="left:1045.3px;top:423.65px;width:3.8px;height:0.9px;background:#fff"></div>
<div class="a" style="left:376px;top:438.80px;width:695.5px;height:1px;background:#eceef1"></div>
<div class="a" style="left:393.7px;top:451.40px;width:7.5px;height:0.95px;background:#555"></div>
<div class="a" style="left:393.7px;top:454.30px;width:7.5px;height:0.95px;background:#555"></div>
<div class="a" style="left:393.7px;top:457.20px;width:7.5px;height:0.95px;background:#555"></div>
<div class="a" style="left:425.5px;top:444.00px;width:50.3px;height:21.5px;border:1px solid #adadad;border-radius:2px"></div>
<div class="t" style="left:432.8px;top:449.90px;font-size:8.2px;letter-spacing:-0.2px;color:#777">SQ003</div>
<div class="a" style="left:483.2px;top:443.50px;width:467.3px;height:22.3px;border:1px solid #a6a6a6;border-radius:2px"></div>
<div class="a" style="left:925.3px;top:443.50px;width:1px;height:22.3px;background:#a6a6a6"></div>
<div class="t" style="left:490.9px;top:449.90px;font-size:8.2px;letter-spacing:-0.08px;color:#555">35-45 years</div>
<svg class="a" style="left:933.6px;top:449.40px" width="9" height="9" viewBox="0 0 9 9"><path d="M0.2 8.8 L0.6 6.4 L6.2 0.8 Q6.8 0.3 7.4 0.8 L8.2 1.6 Q8.7 2.2 8.2 2.8 L2.6 8.4 Z" fill="#1e1e1e"/><path d="M5.4 1.6 L7.4 3.6" stroke="#fff" stroke-width="0.45"/></svg>
<div class="a" style="left:959.2px;top:443.90px;width:49.5px;height:21.4px;border:1px solid #adadad;border-radius:2px"></div>
<div class="t" style="left:966.6px;top:449.70px;font-size:8.6px;color:#8c8c8c">1</div>
<div class="a" style="left:1016.4px;top:447.00px;width:19.1px;height:15.3px;border:1px solid #b3b3b3;border-radius:2px"></div>
<div class="a" style="left:1022.3px;top:450.80px;width:7.7px;height:7.7px;border-radius:50%;background:#1c9c52"></div>
<div class="a" style="left:1024.3px;top:454.25px;width:3.7px;height:0.9px;background:#fff"></div>
<div class="a" style="left:1025.7px;top:452.85px;width:0.9px;height:3.7px;background:#fff"></div>
<div class="a" style="left:1038.1px;top:447.00px;width:18.8px;height:15.3px;border:1px solid #b3b3b3;border-radius:2px"></div>
<div class="a" style="left:1043.3px;top:450.80px;width:7.8px;height:7.8px;border-radius:50%;background:#e2545e"></div>
<div class="a" style="left:1045.3px;top:454.25px;width:3.8px;height:0.9px;background:#fff"></div>
<div class="a" style="left:376px;top:469.40px;width:695.5px;height:1px;background:#eceef1"></div>
<div class="a" style="left:393.7px;top:482.00px;width:7.5px;height:0.95px;background:#555"></div>
<div class="a" style="left:393.7px;top:484.90px;width:7.5px;height:0.95px;background:#555"></div>
<div class="a" style="left:393.7px;top:487.80px;width:7.5px;height:0.95px;background:#555"></div>
<div class="a" style="left:425.5px;top:474.60px;width:50.3px;height:21.5px;border:1px solid #adadad;border-radius:2px"></div>
<div class="t" style="left:432.8px;top:480.50px;font-size:8.2px;letter-spacing:-0.2px;color:#777">SQ002</div>
<div class="a" style="left:483.2px;top:474.10px;width:467.3px;height:22.3px;border:1px solid #a6a6a6;border-radius:2px"></div>
<div class="a" style="left:925.3px;top:474.10px;width:1px;height:22.3px;background:#a6a6a6"></div>
<div class="t" style="left:490.9px;top:480.50px;font-size:8.2px;letter-spacing:-0.08px;color:#555">older than 45 years</div>
<svg class="a" style="left:933.6px;top:480.00px" width="9" height="9" viewBox="0 0 9 9"><path d="M0.2 8.8 L0.6 6.4 L6.2 0.8 Q6.8 0.3 7.4 0.8 L8.2 1.6 Q8.7 2.2 8.2 2.8 L2.6 8.4 Z" fill="#1e1e1e"/><path d="M5.4 1.6 L7.4 3.6" stroke="#fff" stroke-width="0.45"/></svg>
<div class="a" style="left:959.2px;top:474.50px;width:49.5px;height:21.4px;border:1px solid #adadad;border-radius:2px"></div>
<div class="t" style="left:966.6px;top:480.30px;font-size:8.6px;color:#8c8c8c">1</div>
<div class="a" style="left:1016.4px;top:477.60px;width:19.1px;height:15.3px;border:1px solid #b3b3b3;border-radius:2px"></div>
<div class="a" style="left:1022.3px;top:481.40px;width:7.7px;height:7.7px;border-radius:50%;background:#1c9c52"></div>
<div class="a" style="left:1024.3px;top:484.85px;width:3.7px;height:0.9px;background:#fff"></div>
<div class="a" style="left:1025.7px;top:483.45px;width:0.9px;height:3.7px;background:#fff"></div>
<div class="a" style="left:1038.1px;top:477.60px;width:18.8px;height:15.3px;border:1px solid #b3b3b3;border-radius:2px"></div>
<div class="a" style="left:1043.3px;top:481.40px;width:7.8px;height:7.8px;border-radius:50%;background:#e2545e"></div>
<div class="a" style="left:1045.3px;top:484.85px;width:3.8px;height:0.9px;background:#fff"></div>
<div class="a" style="left:376px;top:500.00px;width:695.5px;height:1px;background:#eceef1"></div>
<div class="a" style="left:377.3px;top:512.3px;width:64.3px;height:21.2px;border:1px solid #9fa2a8;border-radius:2px;background:#fff"></div>
<div class="t m" style="left:384.5px;top:517.3px;font-size:8.2px;letter-spacing:-0.1px;color:#333">Load label set</div>
<div class="a" style="left:444.4px;top:512.3px;width:64.3px;height:21.2px;border:1px solid #9fa2a8;border-radius:2px;background:#fff"></div>
<div class="t m" style="left:451.5px;top:517.3px;font-size:8.2px;letter-spacing:-0.2px;color:#333">Save label set</div>
<div class="a" style="left:1019.4px;top:512.3px;width:51.4px;height:21.2px;border:1px solid #9fa2a8;border-radius:2px;background:#fff"></div>
<div class="t m" style="left:1027.5px;top:517.3px;font-size:8.2px;letter-spacing:-0.1px;color:#333">Quick add</div>
<!-- right -->
<div class="panel" style="left:1083.8px;top:100.5px;width:342.5px;height:541px"></div>
<div class="a" style="left:1091px;top:103.6px;width:328.6px;height:28.3px;background:#f6f7f9;border-bottom:1.5px solid #dcdde1"></div>
<div class="t m" style="left:1101px;top:110.7px;font-size:6.97px;color:#333">General Settings</div>
<svg class="a" style="left:1400.5px;top:113px" width="8.5" height="8.5" viewBox="0 0 8.5 8.5"><path d="M0.7 0.7 L7.8 7.8 M7.8 0.7 L0.7 7.8" stroke="#222" stroke-width="1.1"/></svg>
<div class="t" style="left:1096.6px;top:134.40px;font-size:8.2px;letter-spacing:-0.15px;color:#333">Code</div>
<svg class="a" style="left:1118.20px;top:135.70px" width="8" height="8" viewBox="0 0 8 8"><circle cx="4" cy="4" r="3.9" fill="#9b9fa9"/><rect x="3.5" y="3.4" width="1" height="2.8" fill="#fff"/><circle cx="4" cy="2.2" r="0.55" fill="#fff"/></svg>
<div class="a" style="left:1099px;top:153px;width:318.3px;height:27.2px;background:#eef0f5"></div>
<div class="a" style="left:1096.6px;top:149.7px;width:317px;height:26.8px;border:1.8px solid #3c3e45;border-radius:2.5px;background:#fff"></div>
<div class="t" style="left:1104.3px;top:157.8px;font-size:8.2px;letter-spacing:-0.2px;color:#777">G03Q03</div>
<div class="t" style="left:1096.6px;top:186.1px;font-size:8.2px;letter-spacing:-0.05px;color:#333">Question type</div>
<div class="a" style="left:1096.6px;top:201.2px;width:86.2px;height:30px;background:#17ab5b;border-radius:2px"></div>
<svg class="a" style="left:1104.5px;top:211.6px" width="10" height="10" viewBox="0 0 10 10"><path d="M0.7 0.8 L4.2 0.8 L4.2 2.4 L9.1 2.4 L9.1 8.9 L0.7 8.9 Z" fill="none" stroke="#fff" stroke-width="1.1"/></svg>
<div class="t m wt" style="left:1120.9px;top:210px;font-size:8.29px">Multiple choice</div>
<div class="t" style="left:1096.6px;top:241.00px;font-size:8.2px;letter-spacing:-0.06px;color:#333">Question group</div>
<svg class="a" style="left:1155.30px;top:242.30px" width="8" height="8" viewBox="0 0 8 8"><circle cx="4" cy="4" r="3.9" fill="#9b9fa9"/><rect x="3.5" y="3.4" width="1" height="2.8" fill="#fff"/><circle cx="4" cy="2.2" r="0.55" fill="#fff"/></svg>
<div class="a" style="left:1096.5px;top:256.4px;width:317.1px;height:20.8px;border:1px solid #a4a6ab;border-radius:2px;background:#fff"></div>
<div class="t" style="left:1103.8px;top:261.3px;font-size:8.2px;letter-spacing:-0.12px;color:#6f6f6f">Demographics</div>
<svg class="a" style="left:1397px;top:264px" width="8" height="5" viewBox="0 0 8 5"><path d="M1.2 1 L4 3.8 L6.8 1" fill="none" stroke="#333" stroke-width="0.95"/></svg>
<div class="t" style="left:1096.6px;top:286.80px;font-size:8.2px;letter-spacing:0px;color:#333">Other</div>
<svg class="a" style="left:1120.00px;top:288.10px" width="8" height="8" viewBox="0 0 8 8"><circle cx="4" cy="4" r="3.9" fill="#9b9fa9"/><rect x="3.5" y="3.4" width="1" height="2.8" fill="#fff"/><circle cx="4" cy="2.2" r="0.55" fill="#fff"/></svg>
<div class="a" style="left:1096.5px;top:301.9px;width:58.10px;height:20.7px;border:1px solid #8f929a;border-radius:2px;background:#fff"></div>
<div class="t" style="left:1096.5px;width:28.30px;text-align:center;top:306.80px;font-size:8.2px;letter-spacing:-0.15px;color:#333;text-shadow:0.15px 0 0 #333;">On</div>
<div class="a" style="left:1124.8px;top:301.9px;width:29.80px;height:20.7px;background:#333641;border-radius:0 2px 2px 0"></div>
<div class="t" style="left:1124.8px;width:29.80px;text-align:center;top:306.80px;font-size:8.2px;letter-spacing:-0.15px;color:#fff;text-shadow:0.3px 0 0 #fff;">Off</div>
<div class="t" style="left:1096.6px;top:332.30px;font-size:8.2px;letter-spacing:-0.06px;color:#333">Mandatory</div>
<svg class="a" style="left:1138.70px;top:333.60px" width="8" height="8" viewBox="0 0 8 8"><circle cx="4" cy="4" r="3.9" fill="#9b9fa9"/><rect x="3.5" y="3.4" width="1" height="2.8" fill="#fff"/><circle cx="4" cy="2.2" r="0.55" fill="#fff"/></svg>
<div class="a" style="left:1096.5px;top:347.6px;width:90.80px;height:20.7px;border:1px solid #8f929a;border-radius:2px;background:#fff"></div>
<div class="t" style="left:1096.5px;width:27.80px;text-align:center;top:352.50px;font-size:8.2px;letter-spacing:-0.15px;color:#333;text-shadow:0.15px 0 0 #333;">On</div>
<div class="a" style="left:1124.3px;top:347.6px;width:1px;height:20.7px;background:#8f929a"></div>
<div class="t" style="left:1124.3px;width:33.60px;text-align:center;top:352.50px;font-size:8.2px;letter-spacing:-0.15px;color:#333;text-shadow:0.15px 0 0 #333;">Soft</div>
<div class="a" style="left:1157.9px;top:347.6px;width:29.40px;height:20.7px;background:#333641;border-radius:0 2px 2px 0"></div>
<div class="t" style="left:1157.9px;width:29.40px;text-align:center;top:352.50px;font-size:8.2px;letter-spacing:-0.15px;color:#fff;text-shadow:0.3px 0 0 #fff;">Off</div>
<div class="t" style="left:1096.6px;top:378.40px;font-size:8.2px;letter-spacing:0px;color:#333">Condition</div>
<svg class="a" style="left:1134.70px;top:379.70px" width="8" height="8" viewBox="0 0 8 8"><circle cx="4" cy="4" r="3.9" fill="#9b9fa9"/><rect x="3.5" y="3.4" width="1" height="2.8" fill="#fff"/><circle cx="4" cy="2.2" r="0.55" fill="#fff"/></svg>
<div class="a" style="left:1096.5px;top:393.8px;width:317px;height:29.5px;border:1px solid #9a9ca1;border-radius:2px;background:#fff"></div>
<div class="a" style="left:1096.5px;top:393.8px;width:17.2px;height:29.5px;background:#333641;border-radius:2px 0 0 2px"></div>
<div class="a" style="left:1396.3px;top:393.4px;width:17.3px;height:30px;background:#333641;border-radius:0 2px 2px 0"></div>
<div class="t" style="left:1102.7px;top:403px;font-size:7.5px;color:#fff;font-family:'Liberation Mono',monospace">{</div>
<div class="t" style="left:1403.2px;top:402.6px;font-size:7.5px;color:#fff;font-family:'Liberation Mono',monospace">}</div>
<div class="t" style="left:1120.5px;top:398.4px;font-size:8.5px;color:#444;font-family:'Liberation Mono',monospace">1</div>
<svg class="a" style="left:1390px;top:417px" width="6" height="6" viewBox="0 0 6 6"><path d="M5.5 1 L1 5.5 M5.5 3.5 L3.5 5.5" stroke="#999" stroke-width="0.7"/></svg>
<div class="t" style="left:1096.6px;top:433.00px;font-size:8.2px;letter-spacing:0px;color:#333">Encrypted</div>
<svg class="a" style="left:1137.00px;top:434.30px" width="8" height="8" viewBox="0 0 8 8"><circle cx="4" cy="4" r="3.9" fill="#9b9fa9"/><rect x="3.5" y="3.4" width="1" height="2.8" fill="#fff"/><circle cx="4" cy="2.2" r="0.55" fill="#fff"/></svg>
<div class="a" style="left:1096.5px;top:448.4px;width:58.10px;height:20.7px;border:1px solid #8f929a;border-radius:2px;background:#fff"></div>
<div class="t" style="left:1096.5px;width:28.30px;text-align:center;top:453.30px;font-size:8.2px;letter-spacing:-0.15px;color:#333;text-shadow:0.15px 0 0 #333;">On</div>
<div class="a" style="left:1124.8px;top:448.4px;width:29.80px;height:20.7px;background:#333641;border-radius:0 2px 2px 0"></div>
<div class="t" style="left:1124.8px;width:29.80px;text-align:center;top:453.30px;font-size:8.2px;letter-spacing:-0.15px;color:#fff;text-shadow:0.3px 0 0 #fff;">Off</div>
<div class="t" style="left:1096.6px;top:478.70px;font-size:8.2px;letter-spacing:-0.1px;color:#333">Save as default values</div>
<svg class="a" style="left:1180.50px;top:480.00px" width="8" height="8" viewBox="0 0 8 8"><circle cx="4" cy="4" r="3.9" fill="#9b9fa9"/><rect x="3.5" y="3.4" width="1" height="2.8" fill="#fff"/><circle cx="4" cy="2.2" r="0.55" fill="#fff"/></svg>
<div class="a" style="left:1096.5px;top:494.1px;width:58.10px;height:20.7px;border:1px solid #8f929a;border-radius:2px;background:#fff"></div>
<div class="t" style="left:1096.5px;width:28.30px;text-align:center;top:499.00px;font-size:8.2px;letter-spacing:-0.15px;color:#333;text-shadow:0.15px 0 0 #333;">On</div>
<div class="a" style="left:1124.8px;top:494.1px;width:29.80px;height:20.7px;background:#333641;border-radius:0 2px 2px 0"></div>
<div class="t" style="left:1124.8px;width:29.80px;text-align:center;top:499.00px;font-size:8.2px;letter-spacing:-0.15px;color:#fff;text-shadow:0.3px 0 0 #fff;">Off</div>
<div class="a" style="left:1091px;top:522.3px;width:328.6px;height:1px;background:#eceef1"></div>
<div class="t m" style="left:1101.2px;top:530.10px;font-size:6.48px;color:#333">Logic</div>
<svg class="a" style="left:1400.8px;top:533.50px" width="8.5" height="5" viewBox="0 0 8.5 5"><path d="M0.6 0.6 L4.25 4.2 L7.9 0.6" fill="none" stroke="#333" stroke-width="0.9"/></svg>
<div class="a" style="left:1091px;top:550px;width:328.6px;height:1.2px;background:#cdced3"></div>
<div class="t m" style="left:1101.2px;top:558.60px;font-size:7.0px;color:#333">Display</div>
<svg class="a" style="left:1400.8px;top:562.00px" width="8.5" height="5" viewBox="0 0 8.5 5"><path d="M0.6 0.6 L4.25 4.2 L7.9 0.6" fill="none" stroke="#333" stroke-width="0.9"/></svg>
<div class="a" style="left:1091px;top:579px;width:328.6px;height:1.2px;background:#cdced3"></div>
<div class="t m" style="left:1101.2px;top:587.30px;font-size:7.0px;color:#333">Other</div>
<svg class="a" style="left:1400.8px;top:590.70px" width="8.5" height="5" viewBox="0 0 8.5 5"><path d="M0.6 0.6 L4.25 4.2 L7.9 0.6" fill="none" stroke="#333" stroke-width="0.9"/></svg>
<div class="a" style="left:1091px;top:607px;width:328.6px;height:1.2px;background:#cdced3"></div>
<div class="t m" style="left:1101.2px;top:616.00px;font-size:7.22px;color:#333">Statistics</div>
<svg class="a" style="left:1400.8px;top:619.40px" width="8.5" height="5" viewBox="0 0 8.5 5"><path d="M0.6 0.6 L4.25 4.2 L7.9 0.6" fill="none" stroke="#333" stroke-width="0.9"/></svg>
<div class="a" style="left:1091px;top:636px;width:328.6px;height:1.2px;background:#cdced3"></div>
<div class="a" style="left:0;top:654.8px;width:1437px;height:1.2px;background:#efeff2"></div>
</body></html>
